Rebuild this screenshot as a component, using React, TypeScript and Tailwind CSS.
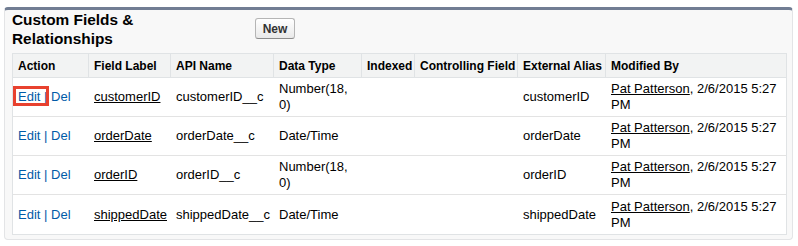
import React from "react";

const cols = "grid grid-cols-[76px_82px_103px_88px_53px_103px_88px_180px]";

const rows = [
  { label: "customerID", api: "customerID__c", type: "Number(18, 0)", alias: "customerID", boxed: true },
  { label: "orderDate", api: "orderDate__c", type: "Date/Time", alias: "orderDate", boxed: false },
  { label: "orderID", api: "orderID__c", type: "Number(18, 0)", alias: "orderID", boxed: false },
  { label: "shippedDate", api: "shippedDate__c", type: "Date/Time", alias: "shippedDate", boxed: false },
];

const headers = ["Action", "Field Label", "API Name", "Data Type", "Indexed", "Controlling Field", "External Alias", "Modified By"];

function Cell({ children }: { children?: React.ReactNode }) {
  return <div className="flex items-center pl-[5px] pr-[2px] text-[13px] leading-[16px] text-black">{children}</div>;
}

export default function App() {
  return (
    <div className="w-[798px] h-[246px] bg-white pt-[7px] pl-[4px]" style={{ fontFamily: '"Liberation Sans", Arial, sans-serif' }}>
      <div className="w-[789px] h-[233px] rounded-[4px] border border-[#e3e4e6] border-t-[3px] border-t-[#717d93] bg-[#f8f8f8] pl-[7px]">
        <div className="flex items-start h-[43px]">
          <div className="w-[150px] text-[15.4px] leading-[19px] font-bold text-black">
            Custom Fields &amp; Relationships
          </div>
          <button className="mt-[8px] ml-[93px] h-[21px] w-[40px] rounded-[3px] border border-[#b5b5b5] border-b-[#8c8c8c] bg-gradient-to-b from-white to-[#e9e9e9] text-[12px] font-bold text-[#333] leading-none">
            New
          </button>
        </div>
        <div className="w-[775px] border border-[#e0e3e5] bg-white">
          <div className={`${cols} h-[24px] bg-[#f2f3f3] border-b border-[#e0e3e5]`}>
            {headers.map((h, i) => (
              <div
                key={h}
                className={`flex items-center pl-[5px] text-[12px] font-bold text-black whitespace-nowrap ${i < headers.length - 1 ? "border-r border-[#e0e3e5]" : ""}`}
              >
                {h}
              </div>
            ))}
          </div>
          {rows.map((r, idx) => (
            <div key={r.label} className={`${cols} h-[39px] ${idx < rows.length - 1 ? "border-b border-[#e3e3e3]" : ""}`}>
              <Cell>
                <span className="relative text-[#015ba7]">
                  Edit <span className="text-[#015ba7]">|</span> Del
                  {r.boxed && (
                    <span className="absolute left-[-5px] top-[-3px] w-[36px] h-[20px] border-[3px] border-[#e8412f]" />
                  )}
                </span>
              </Cell>
              <Cell>
                <span className="underline">{r.label}</span>
              </Cell>
              <Cell>{r.api}</Cell>
              <Cell>{r.type}</Cell>
              <Cell />
              <Cell />
              <Cell>{r.alias}</Cell>
              <Cell>
                <span>
                  <span className="underline">Pat Patterson</span>, 2/6/2015 5:27 PM
                </span>
              </Cell>
            </div>
          ))}
        </div>
      </div>
    </div>
  );
}
